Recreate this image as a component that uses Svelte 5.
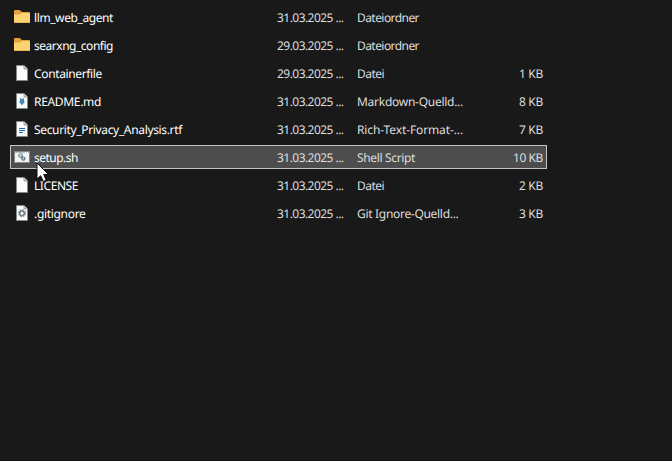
<script>
  const rows = [
    { icon: 'folder', name: 'llm_web_agent', nw: 79, date: '31.03.2025 ...', type: 'Dateiordner', tw: 62 },
    { icon: 'folder', name: 'searxng_config', nw: 79, date: '29.03.2025 ...', type: 'Dateiordner', tw: 62 },
    { icon: 'file', name: 'Containerfile', nw: 68, date: '29.03.2025 ...', type: 'Datei', tw: 27, size: '1 KB', sw: 24 },
    { icon: 'md', name: 'README.md', nw: 67, date: '31.03.2025 ...', type: 'Markdown-Quelld...', tw: 106, size: '8 KB', sw: 24 },
    { icon: 'rtf', name: 'Security_Privacy_Analysis.rtf', nw: 148, date: '31.03.2025 ...', type: 'Rich-Text-Format-...', tw: 106, size: '7 KB', sw: 24 },
    { icon: 'script', name: 'setup.sh', nw: 44, date: '31.03.2025 ...', type: 'Shell Script', tw: 58, size: '10 KB', sw: 30, selected: true },
    { icon: 'file', name: 'LICENSE', nw: 44, date: '31.03.2025 ...', type: 'Datei', tw: 27, size: '2 KB', sw: 24 },
    { icon: 'gear', name: '.gitignore', nw: 51.5, date: '31.03.2025 ...', type: 'Git Ignore-Quelld...', tw: 101.5, size: '3 KB', sw: 24 }
  ];

  function fit(node, width) {
    const natural = node.getBoundingClientRect().width;
    node.style.letterSpacing = `${(width - natural) / node.textContent.length}px`;
  }
</script>

<main>
  {#each rows as row}
    <div class="row" class:selected={row.selected}>
      <svg class="icon" width="16" height="18" viewBox="0 0 16 18">
        {#if row.icon === 'folder'}
          <path d="M0 3Q0 2 1 2H5.5L8 4H15Q16 4 16 5V14H0Z" fill="#e3a23c" />
          <path d="M0 6.5H6L8 5H15Q16 5 16 6V14Q16 15 15 15H1Q0 15 0 14Z" fill="#fcd373" />
          <path d="M0 14Q0 15 1 15H15Q16 15 16 14Z" fill="#eeb650" />
        {:else if row.icon === 'script'}
          <rect x=".5" y="3.5" width="15" height="11" fill="#f3f5f5" stroke="#858989" />
          <path d="M1 4.5H15" stroke="#b8bcbc" />
          <path d="M11 4.5H12M13 4.5H14" stroke="#fff" />
          <circle cx="6.5" cy="7.5" r="2" fill="#b5cbd3" stroke="#8fa5ad" stroke-width="1.2" />
          <circle cx="9.3" cy="10.6" r="1.6" fill="#cad7db" stroke="#5f7580" stroke-width="1.2" />
          <path d="M7 8L9 10" stroke="#6f838d" />
        {:else}
          <path d="M2.5 1.5H10L13.5 5V16.5H2.5Z" fill="#fafcfc" stroke="#85898a" />
          <path d="M10 1.5V5H13.5" fill="#d5d8d8" stroke="#85898a" stroke-width=".8" />
          {#if row.icon === 'md'}
            <path d="M6 6L8 7L10 6V9.5H11.3L8 13.2L4.7 9.5H6Z" fill="#438bbd" />
          {:else if row.icon === 'rtf'}
            <path d="M5 8.5H11M5 10.5H11M5 12.5H9" stroke="#1f6fbd" stroke-width="1" />
          {:else if row.icon === 'gear'}
            <circle cx="8" cy="9.2" r="3.4" fill="none" stroke="#707d86" stroke-width="1.2" stroke-dasharray="1.5 1.17" />
            <circle cx="8" cy="9.2" r="2.3" fill="#fafcfc" stroke="#707d86" stroke-width="1.5" />
          {/if}
        {/if}
      </svg>
      <div class="name"><span use:fit={row.nw}>{row.name}</span></div>
      <div class="date"><span use:fit={66.5}>{row.date}</span></div>
      <div class="type"><span use:fit={row.tw}>{row.type}</span></div>
      <div class="size">{#if row.size}<span use:fit={row.sw}>{row.size}</span>{/if}</div>
    </div>
  {/each}
  <svg class="cursor" width="14" height="22" viewBox="0 0 14 22">
    <path d="M1 1V17L4.7 13.7L7.3 19.5L10.2 18.2L7.7 12.5H12.5Z" fill="#fff" stroke="#111" stroke-width="1" />
  </svg>
</main>

<style>
  :global(body) { margin: 0; background: #191919; }
  main {
    position: relative;
    box-sizing: border-box;
    height: 461px;
    padding: 5px 0 0 10px;
    display: flex;
    flex-direction: column;
    gap: 4px;
    background: #191919;
    border-bottom: 1px solid #141214;
    font: 12px/16px "Noto Sans", "Open Sans", sans-serif;
    text-rendering: geometricPrecision;
    color: #dedede;
    overflow: hidden;
  }
  .row {
    box-sizing: border-box;
    display: flex;
    align-items: center;
    width: 537px;
    height: 24px;
    flex: none;
    border: 1px solid transparent;
    padding-left: 3px;
    white-space: pre;
  }
  .selected { background: #4d4d4d; border-color: #c4c4c4; }
  .icon { flex: none; margin-right: 4px; }
  .row > div { padding-top: 2px; }
  span { display: inline-block; }
  .name { width: 243px; color: #fff; }
  .date { width: 80px; }
  .type { width: 120px; }
  .size { flex: 1; display: flex; justify-content: flex-end; padding-right: 3px; }
  .cursor { position: absolute; left: 36px; top: 162px; }
</style>
